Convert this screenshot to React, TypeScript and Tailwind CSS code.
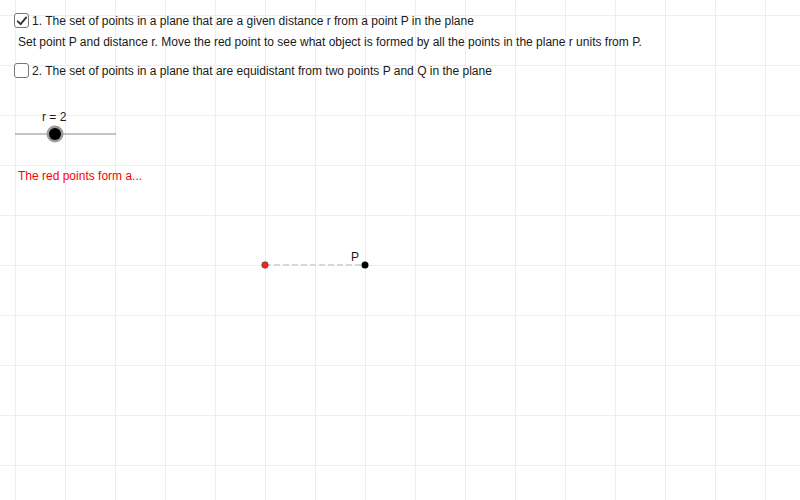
import React from "react"

const gridLines = Array.from({ length: 16 }, (_, i) => 15 + i * 50)

function Check({ checked }: { checked: boolean }) {
  return (
    <span className="inline-flex w-[15px] h-[15px] rounded-[3px] border-[1.5px] border-[#777] bg-white items-center justify-center shrink-0">
      {checked && (
        <svg width="12" height="12" viewBox="0 0 12 12">
          <path d="M1.8 6.3 L4.6 9.2 L10.2 2.4" fill="none" stroke="#333" strokeWidth="1.9" strokeLinejoin="round" strokeLinecap="round" />
        </svg>
      )}
    </span>
  )
}

export default function App() {
  return (
    <div className="relative w-[800px] h-[500px] bg-white overflow-hidden text-[12px] leading-[14px] text-[#1a1a1a]" style={{ fontFamily: '"Liberation Sans", Arial, sans-serif' }}>
      {/* graphics view: grid, slider and points */}
      <svg className="absolute inset-0" width="800" height="500">
        {gridLines.map((v) => (
          <line key={"v" + v} x1={v + 0.5} y1={0} x2={v + 0.5} y2={500} stroke="#eeeeee" strokeWidth="1" />
        ))}
        {gridLines.map((v) => (
          <line key={"h" + v} x1={0} y1={v + 0.5} x2={800} y2={v + 0.5} stroke="#eeeeee" strokeWidth="1" />
        ))}
        <line x1="15" y1="134" x2="116" y2="134" stroke="#8a8a8a" strokeWidth="1" />
        <circle cx="55" cy="134" r="8.5" fill="#9a9a9a" />
        <circle cx="55" cy="134" r="6" fill="#000" />
        <line x1="265" y1="265" x2="365" y2="265" stroke="#d9d9d9" strokeWidth="2" strokeDasharray="6 3" />
        <circle cx="265" cy="265" r="3.2" fill="#ff2020" stroke="#444" strokeWidth="0.8" />
        <circle cx="365" cy="265" r="3.5" fill="#000" />
      </svg>

      {/* text objects on the canvas */}
      <div className="absolute left-[14px] top-[13px] flex flex-col">
        <label className="flex items-center gap-[3px]">
          <Check checked />
          <span>1. The set of points in a plane that are a given distance r from a point P in the plane</span>
        </label>
        <p className="mt-[7px] ml-[4px]">
          Set point P and distance r. Move the red point to see what object is formed by all the points in the plane r units from P.
        </p>
        <label className="mt-[14px] flex items-center gap-[3px]">
          <Check checked={false} />
          <span>2. The set of points in a plane that are equidistant from two points P and Q in the plane</span>
        </label>
      </div>
      <div className="absolute left-[42px] top-[110px]">r = 2</div>
      <div className="absolute left-[18px] top-[169px] text-[#ff0000]">The red points form a...</div>
      <div className="absolute left-[351px] top-[250px]">P</div>
    </div>
  )
}
